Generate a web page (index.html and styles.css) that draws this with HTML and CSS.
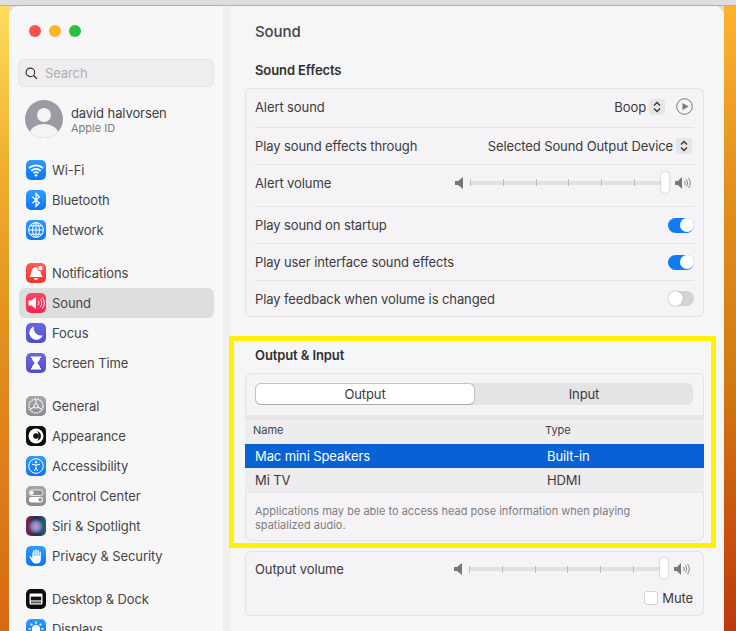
FILE: index.html
```html
<!DOCTYPE html>
<html lang="en">
<head>
    <meta charset="UTF-8">
    <title>Sound</title>
    <link rel="stylesheet" href="styles.css">
</head>
<body>
<div class="screen">
    <div class="window">
        <aside class="sidebar">
            <div class="lights"><i class="red"></i><i class="amber"></i><i class="green"></i></div>
            <div class="search">
                <svg width="13" height="13" viewBox="0 0 14 14"><circle cx="5.800" cy="5.800" r="4.600" fill="none" stroke="#333" stroke-width="1.200"/><path d="M9.200 9.200l3.600 3.600" stroke="#333" stroke-width="1.400"/></svg>
                <span>Search</span>
            </div>
            <div class="account">
                <svg class="avatar" width="38" height="38" viewBox="0 0 38 38"><defs><clipPath id="av"><circle cx="19" cy="19" r="19"/></clipPath></defs><circle cx="19" cy="19" r="19" fill="#9b9ca3"/><circle cx="19" cy="15" r="7" fill="#f4f4f5"/><ellipse cx="19" cy="33" rx="14" ry="9" fill="#f4f4f5" clip-path="url(#av)"/></svg>
                <div>
                    <div class="account-name">david halvorsen</div>
                    <div class="account-sub">Apple ID</div>
                </div>
            </div>

            <ul class="nav">
                <li><span class="tile blue"><svg viewBox="0 0 20 20"><path d="M3 8.200a10 10 0 0 1 14 0M5.300 10.800a6.800 6.800 0 0 1 9.400 0M7.600 13.100a3.400 3.400 0 0 1 4.800 0" fill="none" stroke="#fff" stroke-width="1.700"/><circle cx="10" cy="15.300" r="1.300" fill="#fff"/></svg></span>Wi-Fi</li>
                <li><span class="tile blue"><svg viewBox="0 0 20 20"><path d="M6.300 6.800l7 6.200L10 16.400V3.600l3.300 3.400-7 6.200" fill="none" stroke="#fff" stroke-width="1.200"/></svg></span>Bluetooth</li>
                <li><span class="tile blue"><svg viewBox="0 0 20 20"><g fill="none" stroke="#fff" stroke-width="1"><circle cx="10" cy="10" r="7.400"/><ellipse cx="10" cy="10" rx="3.400" ry="7.400"/><path d="M10 2.600v14.800M2.600 10h14.800M4 5.800h12M4 14.200h12"/></g></svg></span>Network</li>
            </ul>

            <ul class="nav">
                <li><span class="tile red-tile"><svg viewBox="0 0 20 20"><path d="M10 4.200a4.600 4.600 0 0 0-4.600 4.600c0 3-1.600 4-1.900 5.200h13c-.3-1.200-1.900-2.200-1.900-5.200A4.600 4.600 0 0 0 10 4.200z" fill="#fff"/><path d="M8 15h4a2 2 0 0 1-4 0z" fill="#fff"/><circle cx="14.400" cy="5" r="2.800" fill="#fff" stroke="#fb4a3d"/></svg></span>Notifications</li>
                <li class="active"><span class="tile pink"><svg viewBox="0 0 20 20"><path d="M2.500 7.600h3L10 4v12l-4.500-3.600h-3z" fill="#fff"/><path d="M12 7.600a3.400 3.400 0 0 1 0 4.800M14 5.800a6 6 0 0 1 0 8.400M16 4.200a8.400 8.400 0 0 1 0 11.600" fill="none" stroke="#fff" stroke-width=".9"/></svg></span>Sound</li>
                <li><span class="tile indigo"><svg viewBox="0 0 20 20"><path d="M8 3.400a6.900 6.900 0 1 0 8.800 8.800A7.200 7.200 0 0 1 8 3.400z" fill="#fff"/></svg></span>Focus</li>
                <li><span class="tile indigo"><svg viewBox="0 0 20 20"><path d="M5 3.400h10v1.500h-1c0 3.200-2.600 3.900-2.600 5.100s2.600 1.900 2.600 5.100h1v1.500H5v-1.500h1c0-3.200 2.600-3.900 2.600-5.100S6 8.100 6 4.900H5z" fill="#fff"/></svg></span>Screen Time</li>
            </ul>

            <ul class="nav">
                <li><span class="tile grey"><svg viewBox="0 0 20 20"><g fill="none" stroke="#f2f2f2"><circle cx="10" cy="10" r="7" stroke-width="1.400" stroke-dasharray="2 .8"/><circle cx="10" cy="10" r="2" stroke-width="1.100"/><path d="M10 3.500v4.500M8.300 11l-4 2.300M11.700 11l4 2.300" stroke-width="1.100"/></g></svg></span>General</li>
                <li><span class="tile black"><svg viewBox="0 0 20 20"><circle cx="10" cy="10" r="7.500" fill="#fff"/><path d="M10 5a5 5 0 0 1 0 10 2.600 5 0 0 0 0-10z" fill="#111"/><circle cx="10" cy="10" r="2.800" fill="#111"/></svg></span>Appearance</li>
                <li><span class="tile blue"><svg viewBox="0 0 20 20"><circle cx="10" cy="10" r="7.300" fill="none" stroke="#fff" stroke-width="1"/><circle cx="10" cy="6.200" r="1.100" fill="#fff"/><path d="M6 8.300l4 .7 4-.7M10 9v2.600M10 11.600l-1.600 3.400M10 11.600l1.600 3.400" fill="none" stroke="#fff" stroke-width="1"/></svg></span>Accessibility</li>
                <li><span class="tile grey"><svg viewBox="0 0 20 20"><rect x="3" y="4" width="14" height="5.500" rx="2.700" fill="#8e8e93" stroke="#fff" stroke-width=".8"/><circle cx="5.800" cy="6.700" r="2" fill="#fff"/><rect x="3" y="11" width="14" height="5.500" rx="2.700" fill="#fff"/><circle cx="14.200" cy="13.700" r="1.800" fill="#8e8e93"/></svg></span>Control Center</li>
                <li><span class="tile siri"></span>Siri &amp; Spotlight</li>
                <li><span class="tile blue"><svg viewBox="0 0 20 20"><path d="M6.200 7v5.500L5 10.700c-.8-.9-1.800-.2-1.200.8l2.600 4.300c.7 1.100 1.700 1.700 3.200 1.700h1.600c2.500 0 3.600-1.700 3.600-4V6.300c0-1-1.300-1-1.300 0V10h-.7V4.600c0-1-1.400-1-1.400 0V10h-.7V3.700c0-1-1.400-1-1.400 0V10H8.600V4.900c0-1-1.400-1-1.400 0V10h-.4V7c0-.9-.6-.9-.6 0z" fill="#fff"/></svg></span>Privacy &amp; Security</li>
            </ul>

            <ul class="nav">
                <li><span class="tile black"><svg viewBox="0 0 20 20"><rect x="3.500" y="4.500" width="13" height="11" rx="1" fill="#fff"/><rect x="4.800" y="7.600" width="10.400" height="3.800" fill="#111"/><rect x="4.800" y="12.400" width="10.400" height="2" fill="#555"/></svg></span>Desktop &amp; Dock</li>
                <li><span class="tile blue"><svg viewBox="0 0 20 20"><circle cx="10" cy="10" r="4" fill="#fff"/><path d="M10 2.500v2.200M10 15.300v2.200M2.500 10h2.200M15.300 10h2.200M4.700 4.700l1.600 1.600M13.700 13.700l1.600 1.600M4.700 15.300l1.600-1.600M13.700 6.300l1.600-1.600" stroke="#fff" stroke-width="1.400"/></svg></span>Displays</li>
            </ul>
        </aside>

        <main class="content">
            <h1>Sound</h1>

            <h2 class="first">Sound Effects</h2>
            <section class="card">
                <div class="row row-top">
                    <span>Alert sound</span>
                    <span class="right">Boop
                        <span class="stepper"><svg width="8" height="12" viewBox="0 0 8 12"><path d="M1 4.500L4 1.500l3 3M1 7.500l3 3 3-3" fill="none" stroke="#333" stroke-width="1.300"/></svg></span>
                        <svg class="play" width="17" height="17" viewBox="0 0 17 17"><circle cx="8.500" cy="8.500" r="7.800" fill="none" stroke="#777" stroke-width="1"/><path d="M6.500 5l6 3.500-6 3.500z" fill="#777"/></svg>
                    </span>
                </div>
                <div class="row">
                    <span>Play sound effects through</span>
                    <span class="right">Selected Sound Output Device
                        <span class="stepper stepper-end"><svg width="8" height="12" viewBox="0 0 8 12"><path d="M1 4.500L4 1.500l3 3M1 7.500l3 3 3-3" fill="none" stroke="#333" stroke-width="1.300"/></svg></span>
                    </span>
                </div>
                <div class="row row-slider">
                    <span>Alert volume</span>
                    <div class="volume">
                        <svg width="9" height="12" viewBox="0 0 9 12"><path d="M0 4h3l5-4v12L3 8H0z" fill="#777"/></svg>
                        <div class="slider"><i></i><i></i><i></i><i></i><i></i><i></i><b></b></div>
                        <svg width="18" height="12" viewBox="0 0 18 12"><path d="M0 4h3l4-4v12L3 8H0z" fill="#777"/><path d="M9.500 4a3 3 0 0 1 0 4M11.500 2.500a6 6 0 0 1 0 7M13.500 1a8.500 8.500 0 0 1 0 10" fill="none" stroke="#777" stroke-width=".9"/></svg>
                    </div>
                </div>
                <div class="row">
                    <span>Play sound on startup</span>
                    <span class="toggle on"></span>
                </div>
                <div class="row">
                    <span>Play user interface sound effects</span>
                    <span class="toggle on"></span>
                </div>
                <div class="row">
                    <span>Play feedback when volume is changed</span>
                    <span class="toggle"></span>
                </div>
            </section>

            <h2>Output &amp; Input</h2>
            <section class="card device-card">
                <div class="segments">
                    <span class="segment current">Output</span>
                    <span class="segment">Input</span>
                </div>
                <div class="table-head"><span>Name</span><span>Type</span></div>
                <div class="table-row selected"><span>Mac mini Speakers</span><span>Built-in</span></div>
                <div class="table-row"><span>Mi TV</span><span>HDMI</span></div>
                <p class="note">Applications may be able to access head pose information when playing spatialized audio.</p>
            </section>

            <section class="card out-card">
                <div class="out-line">
                    <span>Output volume</span>
                    <div class="volume">
                        <svg width="9" height="12" viewBox="0 0 9 12"><path d="M0 4h3l5-4v12L3 8H0z" fill="#777"/></svg>
                        <div class="slider"><i></i><i></i><i></i><i></i><i></i><i></i><b></b></div>
                        <svg width="18" height="12" viewBox="0 0 18 12"><path d="M0 4h3l4-4v12L3 8H0z" fill="#777"/><path d="M9.500 4a3 3 0 0 1 0 4M11.500 2.500a6 6 0 0 1 0 7M13.500 1a8.500 8.500 0 0 1 0 10" fill="none" stroke="#777" stroke-width=".9"/></svg>
                    </div>
                </div>
                <div class="mute"><span class="check"></span>Mute</div>
            </section>
        </main>
    </div>
    <div class="highlight"></div>
</div>
</body>
</html>
```

FILE: styles.css
```css
* {
    box-sizing: border-box;
}

body {
    margin: 0;
    font-family: Inter, "Noto Sans", sans-serif;
    font-size: 13px;
    letter-spacing: -.1px;
    color: #3c3c3c;
    background: #dfdde0;
}

.screen {
    position: relative;
    width: 736px;
    height: 626px;
    overflow: hidden;
    margin-top: 5px;
    border-top: 1px solid #e8a93a;
    background:
        linear-gradient(#ffdc5e, #f0b030 25%, #e2921f 50%, #e07c1c 75%, #d56a12) left top / 9px 100% no-repeat,
        linear-gradient(#ffb22f, #e0901c 30%, #d27a12 60%, #c8500f 85%, #bb3a0e) right top / 12px 100% no-repeat;
}

.window {
    display: flex;
    width: 715px;
    height: 660px;
    margin-left: 9px;
    border-radius: 11px 11px 0 0;
    overflow: hidden;
    background: #f6f6f6;
}

/* sidebar */
.sidebar {
    width: 214px;
    flex: none;
    padding: 19px 9px 0;
    background: #f7f7f8;
}

.lights {
    display: flex;
    gap: 8px;
    padding-left: 11px;
}

.lights i {
    width: 12px;
    height: 12px;
    border-radius: 50%;
}

.red { background: #fc4f4c; }
.amber { background: #fdb326; }
.green { background: #27c33f; }

.search {
    display: flex;
    align-items: center;
    gap: 7px;
    height: 28px;
    margin-top: 22px;
    padding-left: 6px;
    border: 1px solid #e5e3e5;
    border-radius: 6px;
    background: #efedef;
    color: #b0aeb0;
}

.account {
    display: flex;
    align-items: center;
    gap: 8px;
    margin: 13px 0 17px 7px;
    height: 38px;
}

.avatar {
    flex: none;
}

.account-name {
    margin-top: 1px;
    line-height: 16px;
    color: #3f3f3f;
}

.account-sub {
    font-size: 11px;
    line-height: 14px;
    letter-spacing: 0;
    color: #7c7c7c;
}

.nav {
    list-style: none;
    margin: 0 0 13px;
    padding: 0;
}

.nav li {
    display: flex;
    align-items: center;
    gap: 6px;
    height: 30px;
    margin-left: 1px;
    padding-left: 7px;
    border-radius: 6px;
    color: #464646;
}

.nav li.active {
    background: #dedede;
}

.tile {
    display: block;
    width: 20px;
    height: 20px;
    flex: none;
    border-radius: 5px;
    overflow: hidden;
}

.tile svg {
    display: block;
    width: 20px;
    height: 20px;
}

.blue { background: linear-gradient(#2f9bff, #0b76f2); }
.red-tile { background: linear-gradient(#ff5e50, #f5302a); }
.pink { background: linear-gradient(#ff4468, #f5244f); }
.indigo { background: linear-gradient(#6a68e0, #4f4dcc); }
.grey { background: linear-gradient(#a6a6ab, #8a8a90); }
.black { background: #0c0c0c; }
.siri {
    background:
        radial-gradient(circle at 50% 52%, #f08ab0 0, #6f8fc8 28%, transparent 55%),
        linear-gradient(90deg, #8a1f50, #2a2a48 55%, #1f6a70);
}

/* main panel */
.content {
    flex: 1;
    margin-left: 8px;
    padding: 0 20px 0 14px;
    background: #f6f6f6;
    box-shadow: -8px 0 0 #efefef;
}

h1 {
    margin: 16px 0 0 10px;
    font-size: 15px;
    line-height: 20px;
    font-weight: 500;
    color: #444;
}

h2 {
    margin: 29px 0 9px 10px;
    font-size: 13px;
    line-height: 18px;
    font-weight: 600;
    color: #303030;
}

h2.first {
    margin-top: 19px;
}

.card {
    border: 1px solid #e4e3e5;
    border-radius: 6px;
    background: #f5f3f6;
}

.row {
    display: flex;
    justify-content: space-between;
    align-items: center;
    height: 37px;
    margin: 0 9px;
    border-bottom: 1px solid #e5e4e6;
}

.row:last-child {
    border-bottom: none;
    height: 35px;
}

.row-top {
    height: 39px;
    padding-bottom: 3px;
}

.row-slider {
    height: 42px;
    padding-bottom: 6px;
}

.right {
    display: flex;
    align-items: center;
    color: #3a3a3a;
}

.stepper {
    display: flex;
    align-items: center;
    justify-content: center;
    width: 16px;
    height: 16px;
    margin-left: 3px;
    border-radius: 4px;
    background: #e6e5e7;
}

.stepper-end {
    margin-right: 2px;
}

.play {
    margin: 0 1px 0 11px;
}

.volume {
    display: flex;
    align-items: center;
    width: 238px;
    margin-right: 1px;
}

.slider {
    position: relative;
    display: flex;
    justify-content: space-between;
    align-items: center;
    flex: 1;
    height: 4px;
    margin: 0 10px 0 6px;
    padding-right: 30px;
    border-radius: 2px;
    background: #e2e1e3;
}

.slider i {
    width: 1px;
    height: 7px;
    background: #bdbdbf;
}

.slider b {
    position: absolute;
    right: -4px;
    top: -9px;
    width: 8px;
    height: 21px;
    border-radius: 4px;
    background: #fff;
    box-shadow: 0 0 2px rgba(0, 0, 0, .3);
}

.toggle {
    position: relative;
    display: block;
    width: 26px;
    height: 15px;
    border-radius: 8px;
    background: #d3d2d4;
}

.toggle::after {
    content: "";
    position: absolute;
    left: 0;
    top: 0;
    width: 15px;
    height: 15px;
    border-radius: 50%;
    background: #fff;
    box-shadow: 0 0 1px rgba(0, 0, 0, .5);
}

.toggle.on {
    background: #0f7bf5;
}

.toggle.on::after {
    left: 12px;
    width: 14px;
    height: 14px;
    top: .5px;
    box-shadow: none;
}

/* output and input */
.segments {
    display: flex;
    height: 22px;
    margin: 9px 10px 10px 9px;
    border-radius: 6px;
    background: #e4e3e5;
}

.segment {
    flex: 1 1 0;
    display: flex;
    align-items: center;
    justify-content: center;
    color: #3a3a3a;
}

.segment.current {
    border: 1px solid #c2c0c3;
    border-bottom-color: #aaa;
    border-radius: 6px;
    background: #fff;
}

.table-head,
.table-row {
    display: grid;
    grid-template-columns: 292px 1fr;
    align-items: center;
    margin: 0 -1px;
}

.table-head {
    height: 29px;
    padding: 0 0 4px 8px;
    border-top: 5px solid #e7e6e8;
    font-size: 11px;
    letter-spacing: 0;
    background: #eeecef;
    color: #444;
}

.table-row {
    height: 24px;
    padding-left: 10px;
    background: #eeecef;
    color: #3a3a3a;
}

.table-row.selected {
    background: #0862d6;
    color: #fff;
}

.note {
    margin: 0;
    padding: 11px 50px 8px 9px;
    border-top: 1px solid #e5e4e6;
    font-size: 11px;
    line-height: 14px;
    letter-spacing: 0;
    color: #7e7d80;
}

.out-card {
    height: 65px;
    margin-top: 10px;
    padding: 0 10px 0 9px;
}

.out-line {
    display: flex;
    justify-content: space-between;
    align-items: center;
    height: 34px;
}

.mute {
    display: flex;
    justify-content: flex-end;
    align-items: center;
    gap: 4px;
    height: 20px;
    margin-top: 2px;
    color: #3a3a3a;
}

.check {
    width: 14px;
    height: 14px;
    border: 1px solid #d4d3d5;
    border-radius: 3px;
    background: #fff;
}

/* annotation drawn over the screenshot */
.highlight {
    position: absolute;
    left: 229px;
    top: 330px;
    width: 487px;
    height: 212px;
    border: 5px solid #fff200;
}
```
